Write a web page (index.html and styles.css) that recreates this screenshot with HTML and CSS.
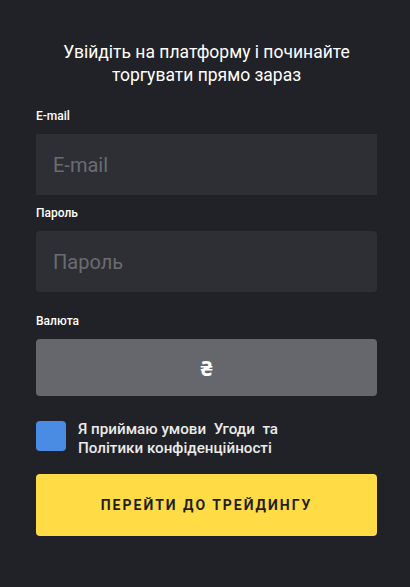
FILE: index.html
```html
<!DOCTYPE html>
<html lang="uk">
<head>
<meta charset="utf-8">
<link rel="stylesheet" href="styles.css">
</head>
<body>
<div class="form">
  <h1 class="title">Увійдіть на платформу і починайте торгувати прямо зараз</h1>
  <div class="field">
    <label class="label">E-mail</label>
    <div class="input input-square">E-mail</div>
  </div>
  <div class="field">
    <label class="label">Пароль</label>
    <div class="input">Пароль</div>
  </div>
  <div class="field field-currency">
    <label class="label">Валюта</label>
    <div class="select">₴</div>
  </div>
  <div class="agree">
    <span class="checkbox"></span>
    <span class="agree-text">Я приймаю умови &nbsp;Угоди&nbsp; та<br>Політики конфіденційності</span>
  </div>
  <button class="submit">ПЕРЕЙТИ ДО ТРЕЙДИНГУ</button>
</div>
</body>
</html>
```
FILE: styles.css
```css
html, body {
  margin: 0;
  padding: 0;
  background: #212227;
  font-family: Roboto, "Noto Sans", sans-serif;
}
.form {
  width: 341px;
  padding: 41px 0 0 36px;
  display: flex;
  flex-direction: column;
}
.title {
  margin: 0;
  font-size: 17.5px;
  line-height: 23px;
  font-weight: 400;
  color: #ffffff;
  text-align: center;
  padding: 0 20px;
}
.field {
  display: flex;
  flex-direction: column;
}
.field:nth-of-type(1) {
  margin-top: 22px;
}
.field:nth-of-type(2) {
  margin-top: 11px;
}
.field-currency {
  margin-top: 22px;
}
.label {
  font-size: 12px;
  line-height: 14px;
  font-weight: 500;
  color: #ffffff;
  margin-bottom: 11px;
}
.input {
  height: 61px;
  box-sizing: border-box;
  background: #2e2f34;
  border-radius: 4px;
  padding: 0 17px;
  display: flex;
  align-items: center;
  font-size: 20px;
  color: #6b6c71;
}
.input-square {
  border-radius: 0;
}
.select {
  height: 57px;
  background: #65676d;
  border-radius: 4px;
  display: flex;
  align-items: center;
  justify-content: center;
  font-size: 21px;
  font-weight: 700;
  color: #ffffff;
}
.agree {
  display: flex;
  align-items: flex-start;
  gap: 12px;
  margin-top: 25px;
}
.checkbox {
  width: 30px;
  height: 30px;
  flex: none;
  background: #4a8be3;
  border-radius: 4px;
}
.agree-text {
  font-size: 15.2px;
  line-height: 19px;
  font-weight: 500;
  color: #ebebeb;
  margin-top: -1px;
}
.submit {
  margin-top: 16px;
  height: 62px;
  border: 0;
  border-radius: 4px;
  background: #ffdc45;
  color: #1f1f1f;
  font-family: Roboto, "Noto Sans", sans-serif;
  font-size: 14px;
  font-weight: 700;
  letter-spacing: 2px;
  padding: 0;
}
```
